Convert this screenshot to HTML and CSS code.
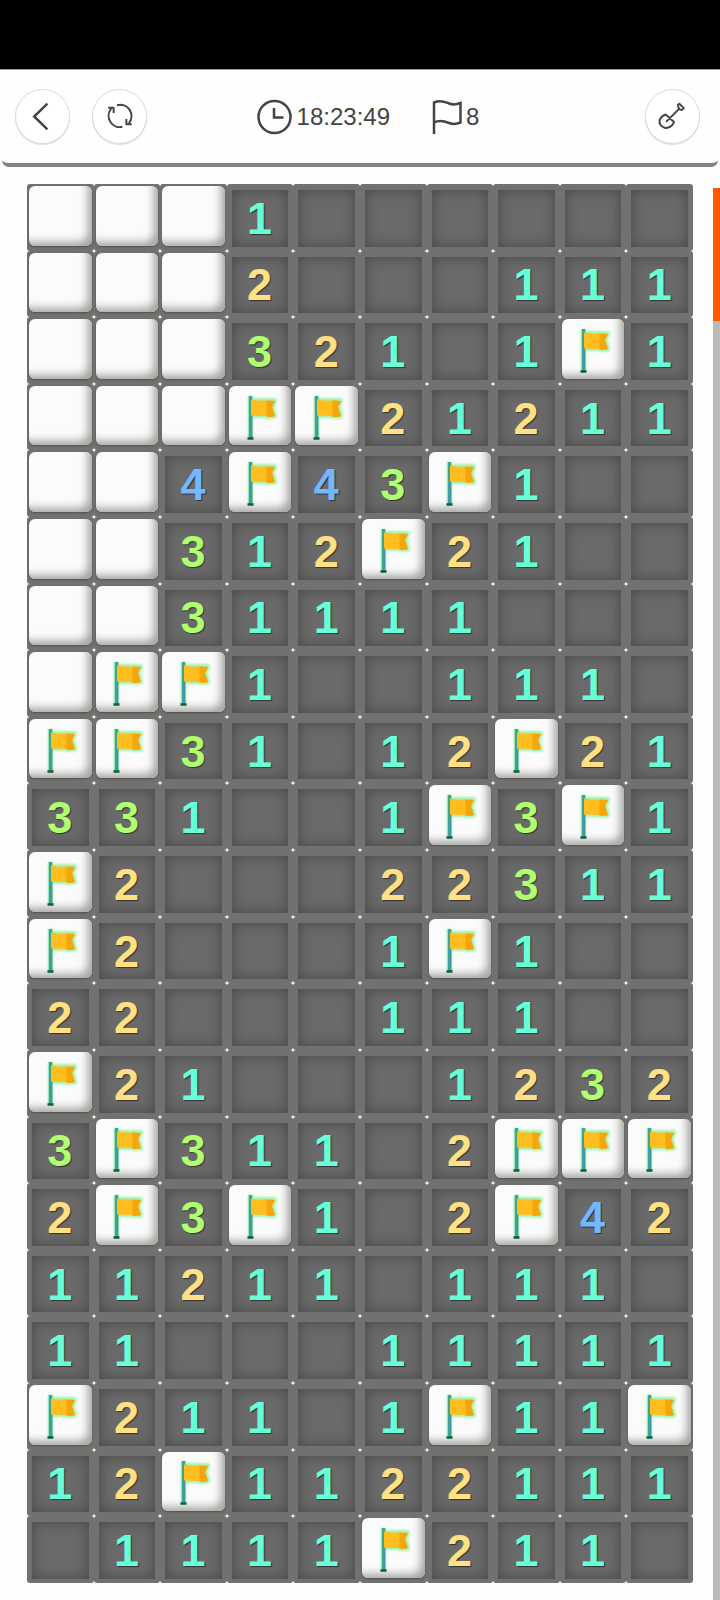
FILE: index.html
```html
<!DOCTYPE html>
<html lang="en">
<head>
<meta charset="utf-8">
<meta name="viewport" content="width=device-width, initial-scale=1">
<title>Minesweeper</title>
<link rel="stylesheet" href="styles.css">
</head>
<body>
<svg class="defs" aria-hidden="true">
  <symbol id="mark" viewBox="0 0 40 56">
    <g class="glow">
      <path d="M10.500 8V51M12 12.500H34.500L32 19L34.500 28Q28 29 24 27.500H12Z"/>
    </g>
    <path class="pole" d="M10.500 8V51"/>
    <path class="pole-shade" d="M11.500 26V50"/>
    <path class="pole-foot" d="M7.500 50.500H13.500"/>
    <path class="cloth" d="M11 11.500Q18 13 25 12.500L35 13L32 19L35 28Q30 29.500 25 28L11 27.500Z"/>
    <path class="fold" d="M26.500 12.500L35 13L32 19L35 28Q30 29.500 26.500 28.500Z"/>
  </symbol>
</svg>
<div class="app">
  <div class="status-bar"></div>
  <header class="toolbar">
    <div class="group">
      <button class="round" type="button" aria-label="Back">
        <svg viewBox="0 0 54 54"><path class="line thick" d="M32 14L18.500 27L32 40"/></svg>
      </button>
      <button class="round" type="button" aria-label="Restart">
        <svg viewBox="0 0 54 54"><path class="line" d="M24.500 15.500A11.500 11.500 0 0 1 36.500 34M30 37.500A11.500 11.500 0 0 1 18.500 19M15.500 18H21V23.500M39.500 35H34V29.500"/></svg>
      </button>
    </div>
    <div class="stats">
      <div class="stat">
        <svg class="icon" viewBox="0 0 36 36"><circle class="line thick" cx="17.500" cy="18" r="16"/><path class="line thick" d="M17 9V18.500H26.500"/></svg>
        <time>18:23:49</time>
      </div>
      <div class="stat">
        <svg class="icon narrow" viewBox="0 0 32 36"><path class="line thick" d="M4 35V3.500C11 .500 16 3.500 19 4.500Q24 6.500 30.500 4V23.500Q24 26 19 24C13 21.500 9 21 4 23.500"/></svg>
        <span>8</span>
      </div>
    </div>
    <button class="round" type="button" aria-label="Dig mode">
      <svg viewBox="0 0 54 54"><path class="line" d="M20 25L28.500 32.500C27.500 36.500 23 39.500 19 38.500C15 37.500 13 34 14 30.500C15 28 17 26 20 25ZM20.500 32.500L34.500 18.500M32.500 15L34 14L38.500 18.500L36.500 20.500L33.500 19.500Z"/></svg>
    </button>
  </header>
  <main class="play">
    <div class="board" id="board"></div>
    <div class="track"><div class="thumb"></div></div>
  </main>
</div>
<script src="board.js"></script>
</body>
</html>
```
FILE: styles.css
```css
* { box-sizing: border-box; }

body {
  margin: 0;
  background: #fdfdfd;
  font-family: "Liberation Sans", Arial, sans-serif;
  color: #444;
}

.defs { position: absolute; width: 0; height: 0; }

.app {
  min-height: 100vh;
  display: flex;
  flex-direction: column;
}

.status-bar {
  height: 70px;
  background: #000;
  border-bottom: 1px solid #999;
}

.toolbar {
  display: flex;
  align-items: center;
  justify-content: space-between;
  height: 97px;
  margin: 0 2px;
  padding: 0 18px 0 13px;
  background: #fefefe;
  border-bottom: 4px solid #848484;
  border-radius: 0 0 7px 7px;
}

.group { display: flex; gap: 22px; }

.round {
  width: 55px;
  height: 55px;
  padding: 0;
  background: #fff;
  border: 1px solid #dcdcdc;
  border-radius: 50%;
  box-shadow: 0 1px 1px #ddd;
}

.round svg { display: block; width: 100%; height: 100%; }

.line { fill: none; stroke: #444; stroke-width: 2; stroke-linejoin: round; }
.thick { stroke-width: 2.5; stroke-linejoin: miter; }

.stats {
  display: flex;
  gap: 40px;
  margin-right: 56px;
  font-size: 24px;
  line-height: 32px;
}

.stat { display: flex; align-items: center; gap: 4px; }
.icon { width: 36px; height: 36px; }
.narrow { width: 32px; }

.play {
  flex: 1;
  display: flex;
  align-items: stretch;
  gap: 20px;
  padding: 17px 0 0 27px;
}

.board {
  flex: 1;
  display: grid;
  grid-template-columns: repeat(10, 1fr);
  align-content: start;
  padding-bottom: 16px;
}

.cell {
  aspect-ratio: 1;
  min-width: 0;
  padding: 6px 5px 4px;
  border: 0;
  border-radius: 3px;
  background: #71716f;
  font: bold 45px/57px "Liberation Sans", Arial, sans-serif;
}

.face {
  display: flex;
  align-items: center;
  justify-content: center;
  width: 100%;
  height: 100%;
  padding-right: 1px;
  background: #6a6a6a;
  box-shadow: inset 0 0 14px #474747;
  text-shadow: 1px 1px 1px #333;
}

.covered { padding: 2px 2px 5px; }

.covered .face {
  border-radius: 6px;
  background: #fbfbfb;
  box-shadow: inset -7px -7px 8px -3px #a4a4a2, 0 1px 2px #50504e;
  text-shadow: none;
}

.n1 { color: #66ffd9; }
.n2 { color: #ffe083; }
.n3 { color: #b0ff70; }
.n4 { color: #70b8ff; }

.mark { width: 40px; height: 56px; }
.glow { fill: none; stroke: #7df08a; stroke-width: 5; stroke-linejoin: round; opacity: .7; filter: blur(1px); }
.pole { fill: none; stroke: #3aa890; stroke-width: 3.5; }
.pole-shade { fill: none; stroke: #4b8fb0; stroke-width: 1.5; }
.pole-foot { stroke: #125c38; stroke-width: 2.5; }
.cloth { fill: #ffbd20; }
.fold { fill: #f5a60c; }

.track {
  width: 7px;
  margin-top: 4px;
  background: #bababa;
}

.thumb { height: 133px; background: #ff5a00; }
```
FILE: board.js
```js
// "#" covered, "F" flagged, "." empty, digits are neighbour counts
const rows = [
  "###1......",
  "###2...111",
  "###321.1F1",
  "###FF21211",
  "##4F43F1..",
  "##312F21..",
  "##31111...",
  "#FF1..111.",
  "FF31.12F21",
  "331..1F3F1",
  "F2...22311",
  "F2...1F1..",
  "22...111..",
  "F21...1232",
  "3F311.2FFF",
  "2F3F1.2F42",
  "11211.111.",
  "11...11111",
  "F211.1F11F",
  "12F1122111",
  ".1111F211."
];
const names = { "#": "Covered", "F": "Flagged", ".": "Empty" };
const flag = '<svg class="mark" viewBox="0 0 40 56"><use href="#mark"/></svg>';

document.getElementById("board").innerHTML = rows.join("").split("").map(c => {
  const covered = c === "#" || c === "F";
  const digit = /\d/.test(c);
  const label = digit ? "" : ` aria-label="${names[c]}"`;
  const kind = covered ? " covered" : digit ? " n" + c : "";
  return `<button type="button" class="cell${kind}"${label}><span class="face">${c === "F" ? flag : digit ? c : ""}</span></button>`;
}).join("");
```
